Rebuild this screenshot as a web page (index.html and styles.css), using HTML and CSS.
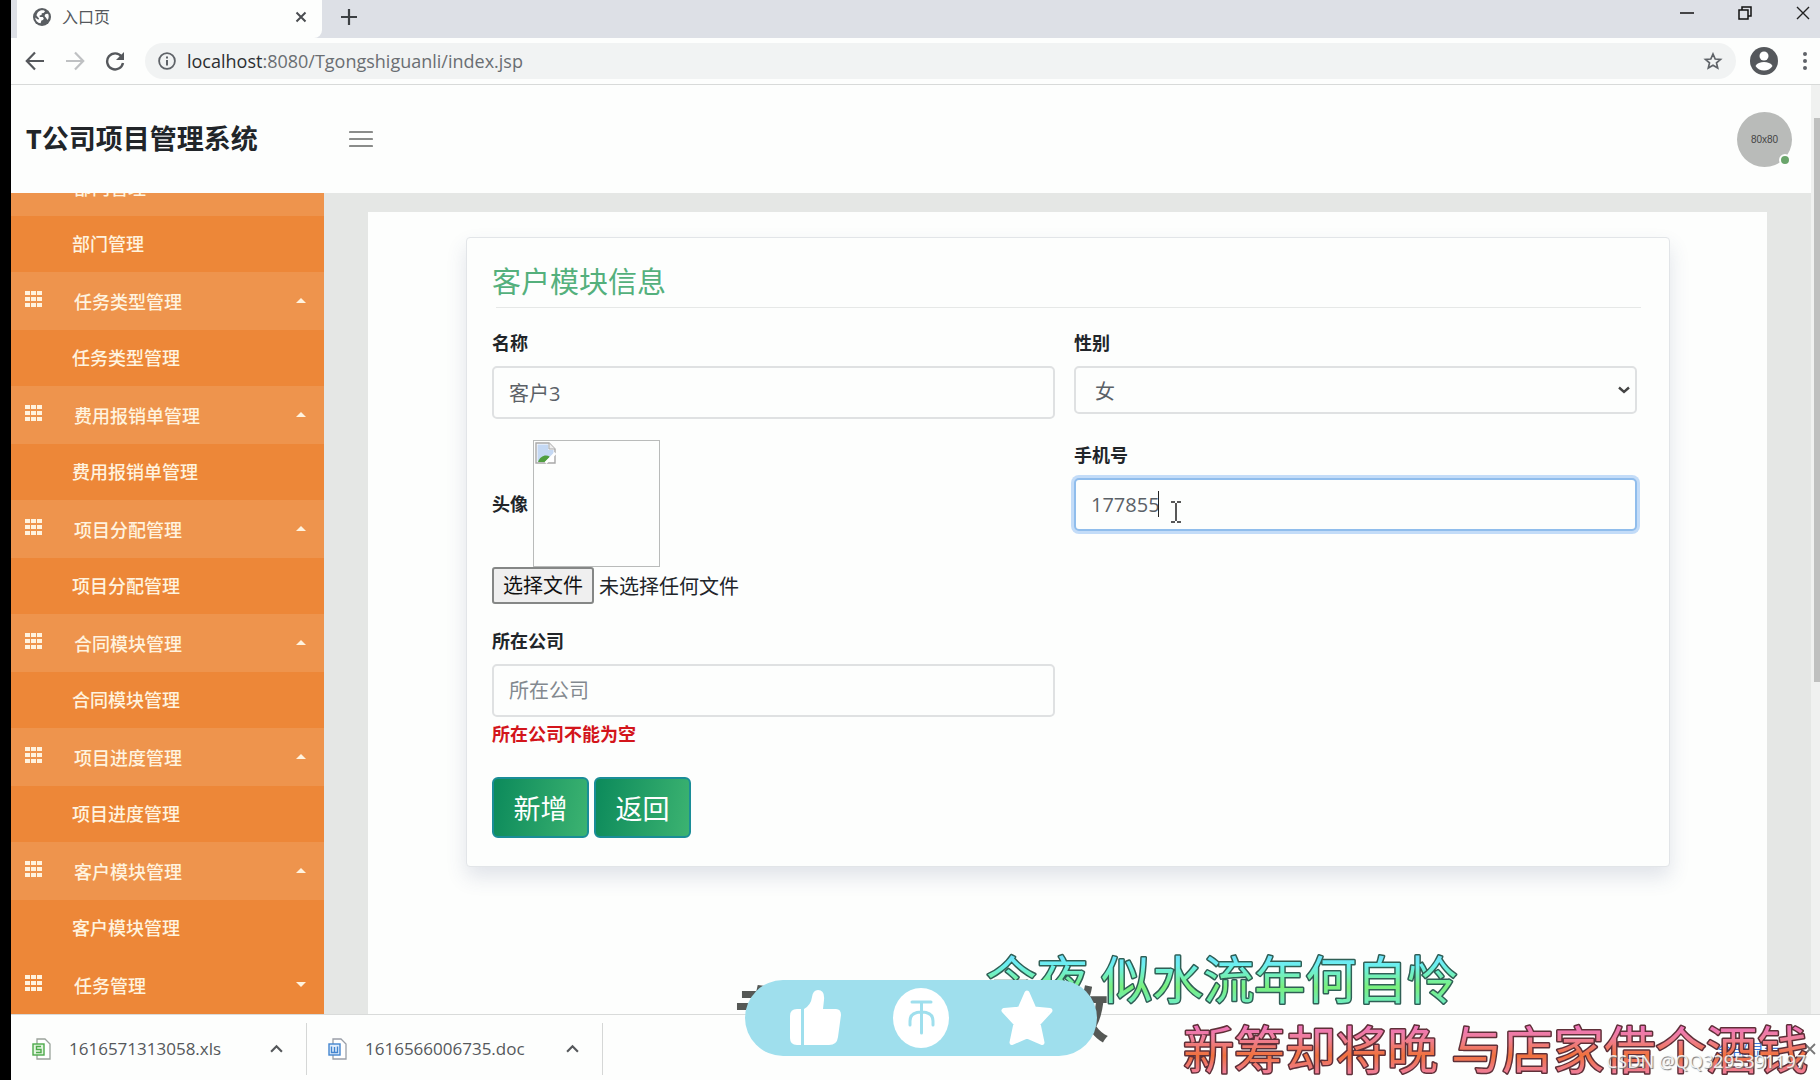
FILE: index.html
```html
<!DOCTYPE html>
<html lang="zh-CN">
<head>
<meta charset="utf-8">
<title>入口页</title>
<link rel="stylesheet" href="styles.css">
</head>
<body>
<svg class="defs" aria-hidden="true">
  <symbol id="th" viewBox="0 0 17 16"><path d="M0 0h5v4H0zM6 0h5v4H6zM12 0h5v4h-5zM0 6h5v4H0zM6 6h5v4H6zM12 6h5v4h-5zM0 12h5v4H0zM6 12h5v4H6zM12 12h5v4h-5z"/></symbol>
  <symbol id="up" viewBox="0 0 12 8"><path d="M1 7l5-5 5 5" fill="none" stroke="currentColor" stroke-width="2"/></symbol>
</svg>

<div class="tabs">
  <div class="tab">
    <svg class="globe" width="18" height="18" viewBox="0 0 18 18"><circle cx="9" cy="9" r="9" fill="#5a5e62"/><path d="M9 2.200c2 0 2.600.5 3 1.200l-1.500 1.500-1.700.4-.3 1.700-1.900.6.2 1.300h3l1 1.600-.8 1.500-1.600.6-.8 2.700C4.500 15 2.500 12.500 2.200 9.500l3 2.200.9-1.200-2.600-3C4 4.500 6.200 2.200 9 2.200zM12.500 6l2.600-.2c1 2 .8 4.600-.6 6.300l-1.700-2.500-1.300-1.500z" fill="#fff"/></svg>
    <span class="tab-title">入口页</span>
    <button class="plain" aria-label="关闭标签页"><svg width="12" height="12" viewBox="0 0 12 12"><path d="M1.500 1.500l9 9M10.500 1.500l-9 9" stroke="#4a4d51" stroke-width="2"/></svg></button>
  </div>
  <button class="plain new-tab" aria-label="新标签页"><svg width="16" height="16" viewBox="0 0 16 16"><path d="M8 0v16M0 8h16" stroke="#3c4043" stroke-width="2.200"/></svg></button>
  <div class="window-buttons">
    <button class="plain" aria-label="最小化"><svg width="14" height="14" viewBox="0 0 14 14"><path d="M0 7h14" stroke="#111" stroke-width="1.500"/></svg></button>
    <button class="plain" aria-label="还原"><svg width="14" height="14" viewBox="0 0 14 14"><path d="M1 4h9v9H1zM4 4V1h9v9h-3" fill="none" stroke="#111" stroke-width="1.500"/></svg></button>
    <button class="plain" aria-label="关闭"><svg width="14" height="14" viewBox="0 0 14 14"><path d="M1 1l12 12M13 1L1 13" stroke="#222" stroke-width="1.400"/></svg></button>
  </div>
</div>

<div class="toolbar">
  <button class="plain" aria-label="后退"><svg width="20" height="20" viewBox="0 0 20 20"><path d="M19 10H2M10 1.500L1.800 10l8.200 8.500" fill="none" stroke="#55585c" stroke-width="2.200"/></svg></button>
  <button class="plain" aria-label="前进"><svg width="20" height="20" viewBox="0 0 20 20"><path d="M1 10h17M10 1.500l8.200 8.500-8.200 8.500" fill="none" stroke="#bfc1c3" stroke-width="2.200"/></svg></button>
  <button class="plain" aria-label="重新加载"><svg width="20" height="20" viewBox="0 0 20 20"><path d="M16.500 5.500A8 8 0 1 0 18 12" fill="none" stroke="#55585c" stroke-width="2.400"/><path d="M19 1v8h-8z" fill="#55585c"/></svg></button>
  <div class="address">
    <svg width="18" height="18" viewBox="0 0 18 18"><circle cx="9" cy="9" r="7.900" fill="none" stroke="#5f6368" stroke-width="1.800"/><path d="M9 8v5.500M9 4.500v2" stroke="#5f6368" stroke-width="2"/></svg>
    <span class="url"><b>localhost</b>:8080/Tgongshiguanli/index.jsp</span>
    <svg width="20" height="18" viewBox="0 0 20 18"><path d="M10 2l2.200 5 5.300.4-4 3.500 1.200 5.200L10 13.300l-4.700 2.800 1.200-5.200-4-3.500L7.800 7z" fill="none" stroke="#5f6368" stroke-width="1.700"/></svg>
  </div>
  <svg class="profile" width="28" height="28" viewBox="0 0 28 28"><circle cx="14" cy="14" r="14" fill="#55585c"/><circle cx="14" cy="9" r="4.500" fill="#fff"/><path d="M5.500 19c1.500-3 5-4 8.500-4s7 1 8.500 4c-2 3.200-5 4.600-8.500 4.600S7.500 22.200 5.500 19z" fill="#fff"/></svg>
  <svg class="kebab" width="4" height="18" viewBox="0 0 4 18" fill="#5f6368"><circle cx="2" cy="2" r="2"/><circle cx="2" cy="9" r="2"/><circle cx="2" cy="16" r="2"/></svg>
</div>

<div class="viewport">
  <div class="page">
    <header class="header">
      <h1>T公司项目管理系统</h1>
      <button class="plain burger" aria-label="菜单"><svg width="24" height="18" viewBox="0 0 24 18"><path d="M1 2h22M1 9h22M1 16h22" stroke="#8a8c8a" stroke-width="2.200" stroke-linecap="round"/></svg></button>
      <div class="avatar">80x80<i></i></div>
    </header>
    <div class="body">
      <nav class="sidebar">
        <a class="parent open" href="#"><span class="first">部门管理</span><i></i></a>
        <a class="child" href="#">部门管理</a>
        <a class="parent open" href="#"><svg><use href="#th"/></svg><span>任务类型管理</span><i></i></a>
        <a class="child" href="#">任务类型管理</a>
        <a class="parent open" href="#"><svg><use href="#th"/></svg><span>费用报销单管理</span><i></i></a>
        <a class="child" href="#">费用报销单管理</a>
        <a class="parent open" href="#"><svg><use href="#th"/></svg><span>项目分配管理</span><i></i></a>
        <a class="child" href="#">项目分配管理</a>
        <a class="parent open" href="#"><svg><use href="#th"/></svg><span>合同模块管理</span><i></i></a>
        <a class="child" href="#">合同模块管理</a>
        <a class="parent open" href="#"><svg><use href="#th"/></svg><span>项目进度管理</span><i></i></a>
        <a class="child" href="#">项目进度管理</a>
        <a class="parent open" href="#"><svg><use href="#th"/></svg><span>客户模块管理</span><i></i></a>
        <a class="child" href="#">客户模块管理</a>
        <a class="parent" href="#"><svg><use href="#th"/></svg><span>任务管理</span><i></i></a>
      </nav>
      <main class="content">
        <form class="card">
          <h2>客户模块信息</h2>
          <hr>
          <div class="columns">
            <div class="column">
              <label for="name">名称</label>
              <input class="control" id="name" type="text" value="客户3">
              <div class="photo">
                <label for="photo">头像</label>
                <div class="preview"><svg width="22" height="22" viewBox="0 0 22 22"><path d="M1 1h13l6 6v14H1z" fill="#fff" stroke="#a8a8a8" stroke-width="1.400"/><path d="M2.500 2.500h11V8h5v4L11 19.500H2.500z" fill="#c4d8f3"/><path d="M3 20c2-6 8-8 12-5l-5 5z" fill="#4f9e3f"/><path d="M14 1v6h6" fill="#eee" stroke="#a8a8a8"/><path d="M10.500 21L20.500 11" stroke="#fff" stroke-width="2.500"/></svg></div>
              </div>
              <div class="file">
                <input id="photo" type="file">
                <label for="photo">选择文件</label>
                <span>未选择任何文件</span>
              </div>
              <label for="company">所在公司</label>
              <input class="control" id="company" type="text" placeholder="所在公司">
              <p class="error">所在公司不能为空</p>
            </div>
            <div class="column">
              <label for="sex">性别</label>
              <div class="select">
                <select class="control" id="sex"><option>女</option><option>男</option></select>
                <svg width="12" height="8" viewBox="0 0 12 8"><path d="M1 1.500l5 4.500 5-4.500" fill="none" stroke="#444" stroke-width="2.400"/></svg>
              </div>
              <label for="phone">手机号</label>
              <div class="typing">
                <input class="control focused" id="phone" type="text" value="177855">
                <i class="caret"></i>
                <svg class="ibeam" width="10" height="22" viewBox="0 0 10 22"><path d="M0 1h4M6 1h4M5 2v18M0 21h4M6 21h4" stroke="#222" stroke-width="1.500"/></svg>
              </div>
            </div>
          </div>
          <div class="actions">
            <button type="button">新增</button>
            <button type="button">返回</button>
          </div>
        </form>
      </main>
    </div>
  </div>
  <div class="scrollbar"><div class="thumb"></div></div>
</div>

<footer class="downloads">
  <div class="download">
    <svg width="20" height="22" viewBox="0 0 20 22"><path d="M5 1h8l5 5v15H5z" fill="#fff" stroke="#9aa39b" stroke-width="1.300"/><rect x="1" y="6" width="11" height="11" fill="#e3f5df" stroke="#4caa4a" stroke-width="1.400"/><path d="M9 8.500H4.500v3H9v3H4" fill="none" stroke="#4caa4a" stroke-width="1.400"/></svg>
    <a href="#">1616571313058.xls</a>
    <button class="plain" aria-label="更多"><svg width="13" height="9"><use href="#up"/></svg></button>
  </div>
  <div class="download">
    <svg width="20" height="22" viewBox="0 0 20 22"><path d="M5 1h8l5 5v15H5z" fill="#fff" stroke="#9a9fa8" stroke-width="1.300"/><rect x="1" y="6" width="11" height="11" fill="#e0edfb" stroke="#4385cf" stroke-width="1.400"/><path d="M3.500 8.500v6h6v-6M6.500 9v5" fill="none" stroke="#4385cf" stroke-width="1.400"/></svg>
    <a href="#">1616566006735.doc</a>
    <button class="plain" aria-label="更多"><svg width="13" height="9"><use href="#up"/></svg></button>
  </div>
  <a class="show-all" href="#">全部显示</a>
  <button class="plain" aria-label="关闭下载栏"><svg width="12" height="12" viewBox="0 0 12 12"><path d="M1 1l10 10M11 1L1 11" stroke="#777" stroke-width="1.800"/></svg></button>
</footer>

<div class="overlay">
  <div class="behind"><span>专</span><span>致</span></div>
  <svg class="lyrics" width="840" height="150" viewBox="0 0 840 150">
    <defs>
      <linearGradient id="cool" gradientUnits="userSpaceOnUse" x1="0" y1="22" x2="0" y2="76"><stop offset="0" stop-color="#6fdcff"/><stop offset=".25" stop-color="#6bf0ee"/><stop offset=".65" stop-color="#7af07c"/><stop offset="1" stop-color="#6beccb"/></linearGradient>
      <linearGradient id="warm" gradientUnits="userSpaceOnUse" x1="0" y1="92" x2="0" y2="146"><stop offset="0" stop-color="#ee70c4"/><stop offset=".3" stop-color="#ef7f9b"/><stop offset=".62" stop-color="#f0713d"/><stop offset="1" stop-color="#f07fa8"/></linearGradient>
    </defs>
    <text x="6" y="69" fill="url(#cool)" stroke="#2f5f55">今夜 似水流年何自怜</text>
    <text x="203" y="139" fill="url(#warm)" stroke="#5f3038">新筹却将晚 与店家借个酒钱</text>
  </svg>
  <div class="pill">
    <svg width="52" height="56" viewBox="0 0 52 56" fill="#fff"><path d="M8 19h4v36H8q-7 0-7-7V26q0-7 7-7z"/><path d="M15 19q7-4 8-12Q24 0 29 0q7 0 6 10l-1 9h13q5 0 5 6l-3 22q-1 8-9 8H15z"/></svg>
    <svg width="56" height="60" viewBox="0 0 56 60"><ellipse cx="28" cy="30" rx="28" ry="30" fill="#fff"/><path d="M19 14h19M28.500 14v31M17 37V33q0-9 11.500-9T40 33v4" fill="none" stroke="#9fdfed" stroke-width="3" stroke-linecap="round"/></svg>
    <svg width="52" height="56" viewBox="0 0 52 56"><path d="M26 3l7 16 16 1.500-12 13 4 19L26 46l-15 6.500 4-19-12-13L19 19z" fill="#fff" stroke="#fff" stroke-width="5" stroke-linejoin="round"/></svg>
  </div>
  <div class="watermark">CSDN @QQ3295391197</div>
</div>
</body>
</html>
```
FILE: styles.css
```css
* { box-sizing: border-box; }

body {
  margin: 0;
  height: 100vh;
  position: relative;
  display: flex;
  flex-direction: column;
  overflow: hidden;
  background: #fdfefd;
  border-left: 11px solid #000;
  color: #212529;
  font-family: "Open Sans", "Noto Sans CJK SC", sans-serif;
  font-size: 20px;
}

a { color: inherit; text-decoration: none; }
svg { display: block; flex: none; }
.defs { position: absolute; width: 0; height: 0; }
.plain { border: 0; padding: 0; background: none; color: inherit; display: flex; }

/* browser frame */
.tabs {
  flex: none;
  height: 38px;
  display: flex;
  background: #dde0e6;
  padding-left: 6px;
}
.tab {
  width: 305px;
  display: flex;
  align-items: center;
  padding: 0 15px 4px 16px;
  background: #fdfefd;
  border-radius: 0 0 8px 0;
}
.tab-title {
  flex: 1;
  margin-left: 11px;
  font-size: 16px;
  line-height: 24px;
  color: #55585c;
}
.new-tab { margin: 9px 0 0 19px; }
.window-buttons { margin: 6px 10px 0 auto; display: flex; gap: 44px; }

.toolbar {
  flex: none;
  height: 47px;
  display: flex;
  align-items: center;
  padding: 0 13px 0 14px;
  border-bottom: 1px solid #d8dad9;
}
.toolbar > .plain { margin-right: 20px; }
.address {
  flex: 1;
  height: 36px;
  display: flex;
  align-items: center;
  padding: 0 13px 0 13px;
  border-radius: 18px;
  background: #f1f3f3;
}
.url {
  flex: 1;
  margin-left: 11px;
  font-size: 18px;
  line-height: 24px;
  color: #6a6e72;
}
.url b { font-weight: 400; color: #2b2e31; }
.profile { margin: 0 25px 0 14px; }

/* page */
.viewport { flex: 1; min-height: 0; display: flex; }
.page { flex: 1; min-width: 0; display: flex; flex-direction: column; }
.header {
  flex: none;
  height: 108px;
  display: flex;
  align-items: center;
  padding: 0 19px 0 15px;
}
.header h1 {
  width: 323px;
  margin: 0;
  font-size: 27px;
  line-height: 36px;
}
.avatar {
  position: relative;
  width: 55px;
  height: 55px;
  margin-left: auto;
  border-radius: 50%;
  background: #b9bbb9;
  color: #444;
  font: 10px/55px "Liberation Sans", sans-serif;
  text-align: center;
}
.avatar i {
  position: absolute;
  right: 1px;
  bottom: 1px;
  width: 12px;
  height: 12px;
  border: 2px solid #fdfefd;
  border-radius: 50%;
  background: #6aa56b;
}
.body { flex: 1; min-height: 0; display: flex; background: #e5e7e5; }

.sidebar {
  flex: none;
  width: 313px;
  display: flex;
  flex-direction: column;
  justify-content: flex-end;
  overflow: hidden;
  background: #ed8738;
  color: #fff3df;
  font-size: 18px;
  font-weight: 500;
}
.parent, .child { flex: none; display: flex; align-items: center; }
.parent { height: 58px; padding: 0 18px 0 14px; }
.parent.open { background: #ee944d; }
.parent svg { width: 17px; height: 16px; margin-bottom: 4px; fill: currentColor; }
.parent span { flex: 1; margin-left: 32px; }
.parent .first { margin-left: 49px; }
.parent i {
  margin-bottom: 2px;
  border: 5px solid transparent;
  border-top-color: currentColor;
  border-bottom: 0;
}
.parent.open i { border-bottom: 5px solid; border-top: 0; }
.child { height: 56px; padding: 0 0 2px 61px; }

.content {
  flex: 1;
  min-width: 0;
  margin: 19px 44px 0;
  padding: 25px 97px 0 98px;
  background: #fdfefd;
}
.card {
  padding: 24px 32px 28px 25px;
  border: 1px solid #e2e5e8;
  border-radius: 4px;
  background: #fdfefd;
  box-shadow: 0 10px 20px rgba(60, 75, 120, .15);
}
.card h2 {
  margin: 0 0 5px;
  font-size: 29px;
  line-height: 40px;
  font-weight: 400;
  color: #54b07c;
}
.card hr { margin: 0 -4px 21px 4px; border: 0; border-top: 1px solid #e6e8e7; }
.columns { display: flex; gap: 19px; }
.column { flex: 1; min-width: 0; display: flex; flex-direction: column; align-items: stretch; }
.column label { font-size: 18px; line-height: 28px; font-weight: 700; margin-bottom: 9px; }
.control {
  width: 100%;
  height: 53px;
  padding: 0 15px;
  border: 2px solid #dfe1e2;
  border-radius: 5px;
  outline: 0;
  background: #fdfefd;
  color: #5b6167;
  font: inherit;
}
.control::placeholder { color: #83898f; opacity: 1; }
.select { position: relative; margin-bottom: 27px; }
.select .control { display: block; height: 48px; padding: 2px 0 0 19px; appearance: none; }
.select svg { position: absolute; right: 7px; top: 20px; }
.typing { position: relative; }
.focused { display: block; border-color: #90bdec; box-shadow: 0 0 0 3px #c3dcf8; }
.caret { position: absolute; left: 84px; top: 13px; width: 1px; height: 26px; background: #222; }
.ibeam { position: absolute; left: 97px; top: 23px; }

.photo { display: flex; align-items: center; gap: 5px; margin-top: 21px; }
.column .photo label { margin: 0; }
.preview { width: 127px; height: 127px; padding: 1px; border: 1px solid #b9bbba; }
.file { position: relative; display: flex; align-items: center; height: 37px; margin-bottom: 23px; }
.file input { position: absolute; width: 102px; height: 37px; opacity: 0; }
.column .file label {
  height: 37px;
  margin: 0 5px 0 0;
  padding: 0 9px;
  border: 2px solid #858786;
  border-radius: 3px;
  background: #efefef;
  font-size: 20px;
  line-height: 33px;
  font-weight: 400;
  color: #111;
}
.error { margin: 3px 0 0; font-size: 18px; line-height: 28px; font-weight: 700; color: #d3151b; }
.actions { display: flex; gap: 5px; margin-top: 29px; }
.actions button {
  height: 61px;
  width: 97px;
  padding: 0;
  border: 2px solid #1a8d97;
  border-radius: 6px;
  background: linear-gradient(100deg, #0c8a5b, #3cb371);
  color: #fff;
  font: inherit;
  font-size: 27px;
}

.scrollbar { flex: none; width: 9px; padding: 33px 0 0 3px; background: #f0f1f0; }
.thumb { height: 564px; background: #bfc0bf; }

/* download shelf */
.downloads {
  flex: none;
  height: 66px;
  display: flex;
  align-items: center;
  padding: 2px 4px 0 0;
  border-top: 1px solid #d9dbda;
  color: #55585b;
}
.download {
  height: 52px;
  width: 296px;
  display: flex;
  align-items: center;
  padding: 0 23px 0 21px;
  border-right: 1px solid #d5d7d6;
  font-size: 17px;
}
.download a { flex: 1; margin-left: 17px; }
.show-all { margin-left: auto; margin-right: 24px; color: #3b78d8; font-size: 16px; }

/* floating video graphics */
.overlay { position: absolute; right: 0; bottom: 0; width: 1095px; height: 150px; pointer-events: none; }
.behind {
  position: absolute;
  left: 9px;
  top: 42px;
  width: 375px;
  display: flex;
  justify-content: space-between;
  color: #555855;
  font-size: 60px;
  line-height: 84px;
  font-weight: 700;
}
.lyrics { position: absolute; right: 0; bottom: 0; font-size: 51px; font-weight: 400; stroke-width: 3px; stroke-linejoin: round; paint-order: stroke; }
.pill {
  position: absolute;
  left: 20px;
  top: 50px;
  width: 352px;
  height: 76px;
  display: flex;
  align-items: center;
  justify-content: space-between;
  padding: 0 44px;
  border-radius: 38px;
  background: #9fdfed;
}
.watermark {
  position: absolute;
  right: 14px;
  bottom: 6px;
  color: rgba(255, 255, 255, .85);
  font: 18px/26px "Noto Sans", sans-serif;
  text-shadow: 1px 1px 1px #777;
}
```
